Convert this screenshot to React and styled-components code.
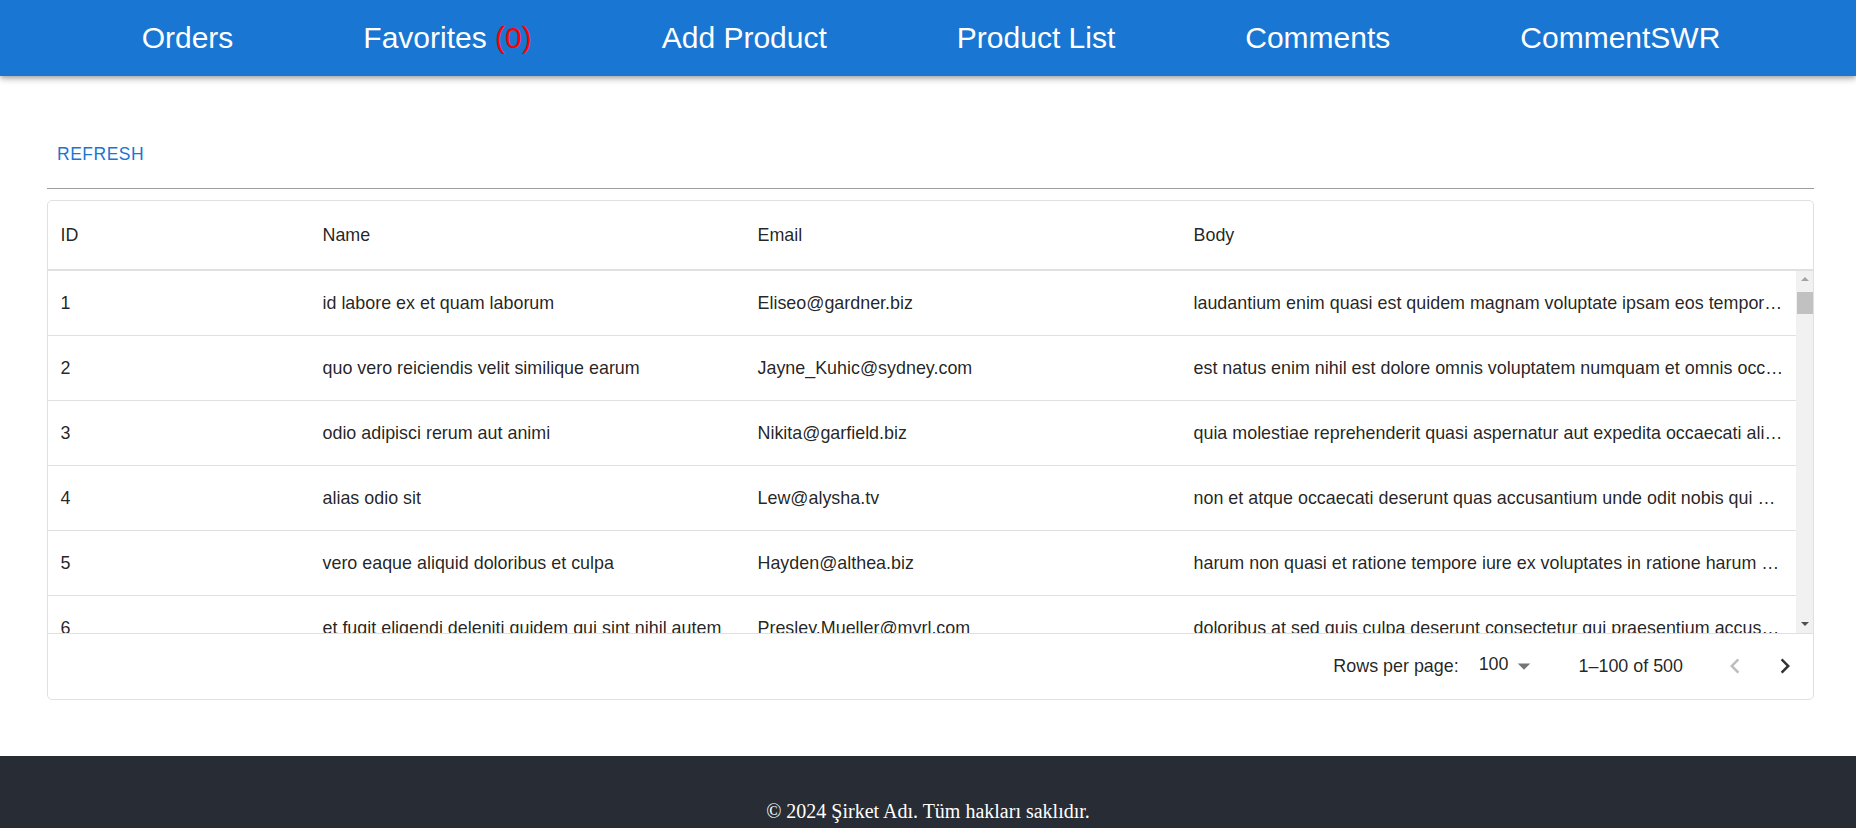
import React from "react";
import styled, { createGlobalStyle } from "styled-components";

const GlobalStyle = createGlobalStyle`
  body {
    margin: 0;
    background: #fff;
    font-family: "Liberation Sans", Arial, sans-serif;
  }
  * { box-sizing: border-box; }
`;

const comments = [
  {
    id: 1,
    name: "id labore ex et quam laborum",
    email: "Eliseo@gardner.biz",
    body: "laudantium enim quasi est quidem magnam voluptate ipsam eos tempora quo necessitatibus dolor quam autem quasi reiciendis et nam sapiente accusantium",
  },
  {
    id: 2,
    name: "quo vero reiciendis velit similique earum",
    email: "Jayne_Kuhic@sydney.com",
    body: "est natus enim nihil est dolore omnis voluptatem numquam et omnis occaecati quod ullam at voluptatem error expedita pariatur nihil sint nostrum",
  },
  {
    id: 3,
    name: "odio adipisci rerum aut animi",
    email: "Nikita@garfield.biz",
    body: "quia molestiae reprehenderit quasi aspernatur aut expedita occaecati aliquam eveniet laudantium omnis quibusdam delectus saepe quia accusamus",
  },
  {
    id: 4,
    name: "alias odio sit",
    email: "Lew@alysha.tv",
    body: "non et atque occaecati deserunt quas accusantium unde odit nobis qui voluptatem quia voluptas consequuntur itaque dolor et qui rerum deleniti ut occaecati",
  },
  {
    id: 5,
    name: "vero eaque aliquid doloribus et culpa",
    email: "Hayden@althea.biz",
    body: "harum non quasi et ratione tempore iure ex voluptates in ratione harum architecto fugit inventore cupiditate voluptates magni quo et",
  },
  {
    id: 6,
    name: "et fugit eligendi deleniti quidem qui sint nihil autem",
    email: "Presley.Mueller@myrl.com",
    body: "doloribus at sed quis culpa deserunt consectetur qui praesentium accusamus fugiat dicta voluptatem rerum ut voluptate autem voluptatem repellendus",
  },
];

const navItems = ["Orders", "Favorites", "Add Product", "Product List", "Comments", "CommentSWR"];

function App() {
  return (
    <>
      <GlobalStyle />
      <NavBar>
        {navItems.map((item) => (
          <NavLink key={item}>
            {item}
            {item === "Favorites" && <Badge> (0)</Badge>}
          </NavLink>
        ))}
      </NavBar>

      <Main>
        <RefreshButton>Refresh</RefreshButton>
        <Divider />

        <GridCard>
          <HeaderRow>
            <Cell>ID</Cell>
            <Cell>Name</Cell>
            <Cell>Email</Cell>
            <Cell>Body</Cell>
          </HeaderRow>

          <GridBody>
            <Rows>
              {comments.map((c) => (
                <Row key={c.id}>
                  <Cell>{c.id}</Cell>
                  <Cell>{c.name}</Cell>
                  <Cell>{c.email}</Cell>
                  <Cell>{c.body}</Cell>
                </Row>
              ))}
            </Rows>
            <ScrollTrack>
              <ScrollArrow $up />
              <ScrollThumb />
              <ScrollSpacer />
              <ScrollArrow />
            </ScrollTrack>
          </GridBody>

          <Pagination>
            <span>Rows per page:</span>
            <PageSelect>
              100
              <svg width="30" height="30" viewBox="0 0 24 24">
                <path d="M7 10l5 5 5-5z" fill="rgba(0,0,0,0.54)" />
              </svg>
            </PageSelect>
            <PageCount>1–100 of 500</PageCount>
            <PageButton $disabled>
              <svg width="30" height="30" viewBox="0 0 24 24">
                <path d="M15.41 16.59 10.83 12l4.58-4.59L14 6l-6 6 6 6z" fill="currentColor" />
              </svg>
            </PageButton>
            <PageButton>
              <svg width="30" height="30" viewBox="0 0 24 24">
                <path d="M8.59 16.59 13.17 12 8.59 7.41 10 6l6 6-6 6z" fill="currentColor" />
              </svg>
            </PageButton>
          </Pagination>
        </GridCard>
      </Main>

      <Footer>
        <FooterText>© 2024 Şirket Adı. Tüm hakları saklıdır.</FooterText>
      </Footer>
    </>
  );
}

export default App;

const NavBar = styled.header`
  height: 76px;
  background-color: #1976d2;
  display: flex;
  align-items: center;
  justify-content: center;
  gap: 130px;
  padding-left: 6px;
  box-shadow: 0px 2px 4px -1px rgba(0, 0, 0, 0.2), 0px 4px 5px 0px rgba(0, 0, 0, 0.14),
    0px 1px 10px 0px rgba(0, 0, 0, 0.12);
`;

const NavLink = styled.a`
  color: #fff;
  font-size: 30px;
  text-decoration: none;
  white-space: pre;
`;

const Badge = styled.span`
  color: #ff0000;
`;

const Main = styled.main`
  padding: 55px 42px 0 47px;
`;

const RefreshButton = styled.button`
  display: block;
  border: none;
  background: transparent;
  color: #1976d2;
  font-family: "Liberation Sans", Arial, sans-serif;
  font-size: 17.5px;
  font-weight: 500;
  letter-spacing: 0.5px;
  line-height: 1.75;
  text-transform: uppercase;
  padding: 7.5px 10px;
  border-radius: 5px;
  cursor: pointer;
`;

const Divider = styled.hr`
  margin: 11px 0 0;
  border: none;
  border-top: 1px solid #9e9e9e;
`;

const GridCard = styled.div`
  margin-top: 11px;
  height: 500px;
  border: 1px solid #e0e0e0;
  border-radius: 5px;
  display: flex;
  flex-direction: column;
  color: rgba(0, 0, 0, 0.87);
  font-size: 17.9px;
`;

const columns = "262px 435px 436px minmax(0, 1fr)";

const HeaderRow = styled.div`
  display: grid;
  grid-template-columns: ${columns};
  height: 70px;
  padding-top: 2px;
  align-items: center;
  border-bottom: 2px solid #e0e0e0;
  flex-shrink: 0;
`;

const Cell = styled.div`
  padding: 0 12.5px;
  overflow: hidden;
  white-space: nowrap;
  text-overflow: ellipsis;
`;

const GridBody = styled.div`
  display: flex;
  flex: 1;
  min-height: 0;
`;

const Rows = styled.div`
  flex: 1;
  min-width: 0;
  overflow: hidden;
`;

const Row = styled.div`
  display: grid;
  grid-template-columns: ${columns};
  height: 65px;
  padding-top: 2px;
  align-items: center;
  border-bottom: 1px solid #e0e0e0;
`;

const ScrollTrack = styled.div`
  width: 17px;
  background: #f1f1f1;
  display: flex;
  flex-direction: column;
  align-items: center;
`;

const ScrollArrow = styled.div`
  width: 17px;
  height: 17px;
  display: flex;
  align-items: center;
  justify-content: center;
  &::after {
    content: "";
    border-left: 4px solid transparent;
    border-right: 4px solid transparent;
    ${({ $up }) =>
      $up ? "border-bottom: 4px solid #a3a3a3;" : "border-top: 4px solid #505050;"}
  }
`;

const ScrollThumb = styled.div`
  width: 16px;
  height: 22px;
  margin-top: 4px;
  background: #c1c1c1;
`;

const ScrollSpacer = styled.div`
  flex: 1;
`;

const Pagination = styled.div`
  height: 66px;
  flex-shrink: 0;
  border-top: 1px solid #e0e0e0;
  display: flex;
  align-items: center;
  justify-content: flex-end;
  padding-right: 13px;
`;

const PageSelect = styled.span`
  display: flex;
  align-items: center;
  margin-left: 20px;
  margin-top: -4px;
  svg {
    margin-top: 4px;
  }
`;

const PageCount = styled.span`
  margin-left: 40px;
`;

const PageButton = styled.span`
  display: flex;
  color: ${({ $disabled }) => ($disabled ? "rgba(0,0,0,0.26)" : "rgba(0,0,0,0.8)")};
  margin-left: ${({ $disabled }) => ($disabled ? "37px" : "20px")};
`;

const Footer = styled.footer`
  margin-top: 56px;
  background-color: #282c34;
  padding: 24px 0 20px;
  text-align: center;
`;

const FooterText = styled.p`
  margin: 20px 0;
  color: #fff;
  font-family: "Liberation Serif", "Times New Roman", serif;
  font-size: 20px;
`;
